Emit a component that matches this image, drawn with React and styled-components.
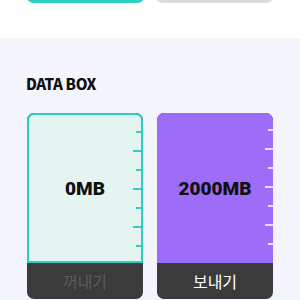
import React from "react";
import styled, { createGlobalStyle } from "styled-components";

const Global = createGlobalStyle`
  html, body { margin: 0; padding: 0; background: #f4f4fd; }
  body { font-family: "Noto Sans CJK KR", "Noto Sans", sans-serif; overflow: hidden; }
`;

const Page = styled.div`
  width: 300px;
  height: 300px;
  overflow: hidden;
  background: #f4f4fd;
`;

const TopArea = styled.div`
  background: #ffffff;
  height: 38px;
  overflow: hidden;
`;

const ButtonRow = styled.div`
  display: flex;
  gap: 10px;
  padding: 0 26px;
  margin-top: -41px;
`;

const TopButton = styled.div`
  flex: 1;
  height: 44px;
  border-radius: 8px;
  background: ${(p) => (p.$active ? "#2ccfc2" : "#dcdcdc")};
`;

const Section = styled.div`
  padding: 0 27px;
`;

const Title = styled.h2`
  margin: 0;
  padding-top: 38px;
  font-family: "Noto Sans CJK KR", sans-serif;
  font-size: 15px;
  font-weight: 800;
  color: #111;
  line-height: 16px;
  letter-spacing: -0.4px;
  margin-left: -1px;
`;

const Cards = styled.div`
  display: grid;
  grid-template-columns: 1fr 1fr;
  gap: 14px;
  margin-top: 21px;
`;

const Card = styled.div`
  height: 186px;
  border-radius: 7px;
  overflow: hidden;
  display: flex;
  flex-direction: column;
  background: #3b3b3b;
`;

const Fill = styled.div`
  position: relative;
  height: 150px;
  box-sizing: border-box;
  border: ${(p) => (p.$outlined ? "2px solid #2ccfc2" : "none")};
  border-radius: 7px 7px 0 0;
  background: ${(p) => p.$bg};
  display: flex;
  align-items: center;
  justify-content: center;
`;

const Amount = styled.div`
  font-family: Roboto, "Noto Sans", sans-serif;
  font-weight: 900;
  font-size: 19px;
  color: #111;
  letter-spacing: 0;
`;

const Ticks = styled.div`
  position: absolute;
  right: 0;
  top: 16px;
  display: flex;
  flex-direction: column;
  align-items: flex-end;
  gap: 17.5px;
`;

const Tick = styled.div`
  height: 1.5px;
  width: ${(p) => (p.$long ? "8px" : "5px")};
  background: ${(p) => p.$color};
`;

const Action = styled.div`
  flex: 1;
  display: flex;
  align-items: center;
  justify-content: center;
  font-size: 16px;
  color: ${(p) => (p.$enabled ? "#ffffff" : "#5c5c5c")};
`;

const ticks = [false, true, false, true, false, true, false];

function DataCard({ amount, bg, outlined, tickColor, label, enabled }) {
  return (
    <Card>
      <Fill $bg={bg} $outlined={outlined}>
        <Amount>{amount}</Amount>
        <Ticks>
          {ticks.map((l, i) => (
            <Tick key={i} $long={l} $color={tickColor} />
          ))}
        </Ticks>
      </Fill>
      <Action $enabled={enabled}>{label}</Action>
    </Card>
  );
}

export default function App() {
  return (
    <Page>
      <Global />
      <TopArea>
        <ButtonRow>
          <TopButton $active />
          <TopButton />
        </ButtonRow>
      </TopArea>
      <Section>
        <Title>DATA BOX</Title>
        <Cards>
          <DataCard amount="0MB" bg="#e4f5f1" outlined tickColor="#2ccfc2" label="꺼내기" />
          <DataCard amount="2000MB" bg="#9d6cf9" tickColor="#e6dcff" label="보내기" enabled />
        </Cards>
      </Section>
    </Page>
  );
}
